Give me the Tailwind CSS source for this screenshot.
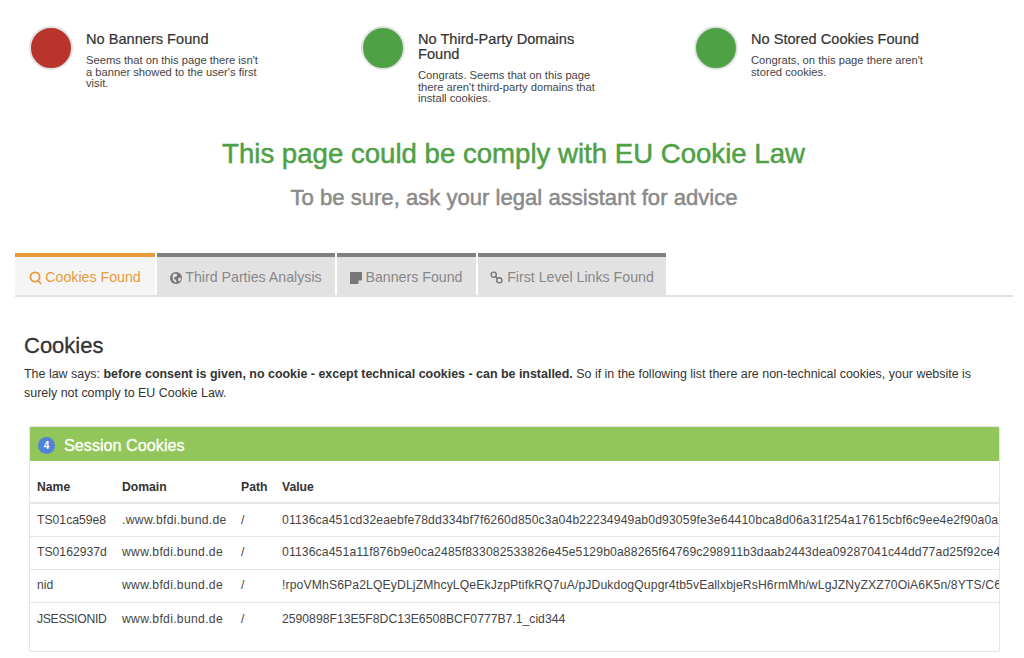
<!DOCTYPE html>
<html lang="en">
<head>
    <meta charset="UTF-8">
    <meta name="viewport" content="width=device-width, initial-scale=1.0">
    <title>Cookie Law Check</title>
    <script src="https://cdn.jsdelivr.net/npm/@tailwindcss/browser@4"></script>
</head>
<body class="bg-white font-['Liberation_Sans',Arial,sans-serif] text-[#333] overflow-hidden">
    <div class="w-[1024px] h-[658px] overflow-hidden">
        <!-- result summary -->
        <div class="grid grid-cols-[332px_333px_1fr] pl-[29px] pt-[26px] h-[138px]">
            <div class="flex">
                <div class="w-[44px] h-[44px] rounded-full bg-[#b9352c] border-[2px] border-[#e2e2e2] shrink-0"></div>
                <div class="ml-[13px] w-[178px] pt-[6px]">
                    <h3 class="text-[14.6px] leading-[15px] mb-[8px] [-webkit-text-stroke:0.2px]">No Banners Found</h3>
                    <p class="text-[11.2px] leading-[11.5px] text-[#444]">Seems that on this page there isn't a banner showed to the user's first visit.</p>
                </div>
            </div>
            <div class="flex">
                <div class="w-[44px] h-[44px] rounded-full bg-[#4fa146] border-[2px] border-[#e2e2e2] shrink-0"></div>
                <div class="ml-[13px] w-[178px] pt-[6px]">
                    <h3 class="text-[14.6px] leading-[15px] mb-[8px] [-webkit-text-stroke:0.2px]">No Third-Party Domains Found</h3>
                    <p class="text-[11.2px] leading-[11.5px] text-[#444]">Congrats. Seems that on this page there aren't third-party domains that install cookies.</p>
                </div>
            </div>
            <div class="flex">
                <div class="w-[44px] h-[44px] rounded-full bg-[#4fa146] border-[2px] border-[#e2e2e2] shrink-0"></div>
                <div class="ml-[13px] w-[178px] pt-[6px]">
                    <h3 class="text-[14.6px] leading-[15px] mb-[8px] [-webkit-text-stroke:0.2px]">No Stored Cookies Found</h3>
                    <p class="text-[11.2px] leading-[11.5px] text-[#444]">Congrats, on this page there aren't stored cookies.</p>
                </div>
            </div>
        </div>

        <h1 class="text-[27.6px] leading-[32px] text-[#4fa146] text-center w-[1027px] [-webkit-text-stroke:0.5px]">This page could be comply with EU Cookie Law</h1>
        <h2 class="text-[22.1px] leading-[28px] text-[#8a8a8a] text-center w-[1028px] mt-[14px] [-webkit-text-stroke:0.5px]">To be sure, ask your legal assistant for advice</h2>

        <!-- tabs -->
        <div class="flex gap-[2px] mx-[15px] w-[998px] mt-[41px] border-b-[2px] border-[#e2e2e2] h-[44px] text-[14.2px]">
            <div class="w-[140px] h-[42px] pt-[3px] bg-[#f5f5f5] border-t-[4px] border-[#e99a3c] text-[#e99a3c] flex items-center justify-center gap-[3px]">
                <svg class="w-[13px] h-[14px]" viewBox="0 0 13 14" fill="none" stroke="#e99a3c" stroke-width="1.8"><circle cx="6" cy="6" r="4.6"/><path d="M9 9.5L12 13"/></svg>
                <span>Cookies Found</span>
            </div>
            <div class="w-[178px] h-[42px] pt-[3px] bg-[#e2e2e2] border-t-[4px] border-[#808080] text-[#888] flex items-center justify-center gap-[3px]">
                <svg class="w-[12px] h-[12px]" viewBox="0 0 12 12"><circle cx="6" cy="6" r="6" fill="#777"/><path d="M3 2.5l2.5-1 2 1-1 2-2 .5-.5 2 2 1 .5 2-1.5 .5-2-2.5-.5-3z M8.5 6l2-.5.5 2-2 2-1-1.5z" fill="#e2e2e2"/></svg>
                <span>Third Parties Analysis</span>
            </div>
            <div class="w-[139px] h-[42px] pt-[3px] bg-[#e2e2e2] border-t-[4px] border-[#808080] text-[#888] flex items-center justify-center gap-[3px]">
                <svg class="w-[12px] h-[12px]" viewBox="0 0 12 12"><path d="M0 0h12v8l-4 4H0z" fill="#777"/><path d="M8.5 12V8.5H12z" fill="#e2e2e2"/></svg>
                <span>Banners Found</span>
            </div>
            <div class="w-[188px] h-[42px] pt-[3px] bg-[#e2e2e2] border-t-[4px] border-[#808080] text-[#888] flex items-center justify-center gap-[4px]">
                <svg class="w-[13px] h-[13px]" viewBox="0 0 13 13" fill="none" stroke="#777" stroke-width="1.4"><circle cx="3.7" cy="3.7" r="2.6"/><circle cx="9.3" cy="9.3" r="2.6"/><path d="M5.5 5.5l2 2"/></svg>
                <span>First Level Links Found</span>
            </div>
        </div>

        <!-- cookies -->
        <div class="pl-[24px] pr-[24px] pt-[35px]">
            <h2 class="text-[22px] leading-[28px] [-webkit-text-stroke:0.3px]">Cookies</h2>
            <p class="text-[12.45px] leading-[19px] mt-[5px] w-[960px]">The law says: <b>before consent is given, no cookie - except technical cookies - can be installed.</b> So if in the following list there are non-technical cookies, your website is surely not comply to EU Cookie Law.</p>
        </div>

        <div class="ml-[29px] mt-[23px] w-[971px] h-[226px] border border-[#e6e6e6] rounded-[2px] overflow-hidden">
            <div class="h-[35px] pt-[3px] -mt-px -mx-px bg-[#92c65a] flex items-center pl-[9px] text-white">
                <span class="w-[17px] h-[17px] rounded-full bg-[#4f82d9] text-[10px] font-bold flex items-center justify-center">4</span>
                <span class="ml-[9px] text-[16.2px] [-webkit-text-stroke:0.3px]">Session Cookies</span>
            </div>
            <table class="w-full table-fixed text-[12.2px] text-[#444]">
                <colgroup>
                    <col class="w-[92px]"><col class="w-[119px]"><col class="w-[41px]"><col>
                </colgroup>
                <thead>
                    <tr class="h-[42px] border-b-[2px] border-[#e6e6e6] text-left text-[#333]">
                        <th class="pl-[7px] pt-[12px] font-bold">Name</th><th class="pt-[12px] font-bold">Domain</th><th class="pt-[12px] font-bold">Path</th><th class="pt-[12px] font-bold">Value</th>
                    </tr>
                </thead>
                <tbody>
                    <tr class="h-[33px] border-b border-[#e6e6e6]">
                        <td class="pl-[7px]">TS01ca59e8</td><td class="tracking-[0.3px]">.www.bfdi.bund.de</td><td>/</td>
                        <td class="whitespace-nowrap overflow-hidden tracking-[0.12px]">01136ca451cd32eaebfe78dd334bf7f6260d850c3a04b22234949ab0d93059fe3e64410bca8d06a31f254a17615cbf6c9ee4e2f90a0a7c</td>
                    </tr>
                    <tr class="h-[33px] border-b border-[#e6e6e6]">
                        <td class="pl-[7px]">TS0162937d</td><td class="tracking-[0.3px]">www.bfdi.bund.de</td><td>/</td>
                        <td class="whitespace-nowrap overflow-hidden tracking-[0.12px]">01136ca451a11f876b9e0ca2485f833082533826e45e5129b0a88265f64769c298911b3daab2443dea09287041c44dd77ad25f92ce41</td>
                    </tr>
                    <tr class="h-[33px] border-b border-[#e6e6e6]">
                        <td class="pl-[7px]">nid</td><td class="tracking-[0.3px]">www.bfdi.bund.de</td><td>/</td>
                        <td class="whitespace-nowrap overflow-hidden tracking-[0.12px]">!rpoVMhS6Pa2LQEyDLjZMhcyLQeEkJzpPtifkRQ7uA/pJDukdogQupgr4tb5vEallxbjeRsH6rmMh/wLgJZNyZXZ70OiA6K5n/8YTS/C6</td>
                    </tr>
                    <tr class="h-[33px]">
                        <td class="pl-[7px] tracking-[-0.3px]">JSESSIONID</td><td class="tracking-[0.3px]">www.bfdi.bund.de</td><td>/</td>
                        <td class="whitespace-nowrap overflow-hidden">2590898F13E5F8DC13E6508BCF0777B7.1_cid344</td>
                    </tr>
                </tbody>
            </table>
        </div>
    </div>
</body>
</html>
